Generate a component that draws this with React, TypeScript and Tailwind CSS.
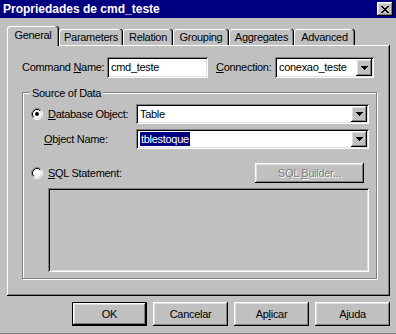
import type { ReactNode } from 'react'

const raised = 'shadow-[inset_-1px_-1px_#000,inset_1px_1px_#fff,inset_-2px_-2px_#808080,inset_2px_2px_#dfdfdf]'
const sunken = 'shadow-[inset_1px_1px_#808080,inset_-1px_-1px_#fff,inset_2px_2px_#000,inset_-2px_-2px_#dfdfdf]'

function Radio({ checked }: { checked?: boolean }) {
  return (
    <svg width="12" height="12" viewBox="0 0 12 12" className="shrink-0">
      <path d="M2.11 9.89 A5.5 5.5 0 0 1 9.89 2.11" fill="none" stroke="#808080" strokeWidth="1" />
      <path d="M9.89 2.11 A5.5 5.5 0 0 1 2.11 9.89" fill="none" stroke="#fff" strokeWidth="1" />
      <circle cx="6" cy="6" r="4.2" fill="#fff" />
      <path d="M2.82 9.18 A4.5 4.5 0 0 1 9.18 2.82" fill="none" stroke="#000" strokeWidth="1" />
      <path d="M9.18 2.82 A4.5 4.5 0 0 1 2.82 9.18" fill="none" stroke="#dfdfdf" strokeWidth="1" />
      {checked && <circle cx="6" cy="6" r="2" fill="#000" />}
    </svg>
  )
}

function DropButton() {
  return (
    <div className={`flex h-full w-[16px] shrink-0 items-center justify-center bg-[#c0c0c0] ${raised}`}>
      <svg width="7" height="4" viewBox="0 0 7 4" shapeRendering="crispEdges">
        <rect x="0" y="0" width="7" height="1" />
        <rect x="1" y="1" width="5" height="1" />
        <rect x="2" y="2" width="3" height="1" />
        <rect x="3" y="3" width="1" height="1" />
      </svg>
    </div>
  )
}

function Combo({ className, children }: { className: string; children: ReactNode }) {
  return (
    <div className={`flex items-stretch bg-white p-[2px] ${sunken} ${className}`}>
      <div className="flex flex-1 items-center pl-[2px]">{children}</div>
      <DropButton />
    </div>
  )
}

function Tab({ label, w, selected }: { label: string; w: string; selected?: boolean }) {
  return (
    <div
      className={`relative flex items-center justify-center rounded-t-[3px] bg-[#c0c0c0] shadow-[inset_-1px_0_#000,inset_-2px_0_#808080,inset_1px_1px_#fff] ${w} ${
        selected ? 'z-10 h-[20px] self-start pb-[1px]' : 'h-[16px]'
      }`}
    >
      {label}
    </div>
  )
}

function Button({ children, isDefault, disabled, className = 'w-[75px] h-[24px]' }: { children: ReactNode; isDefault?: boolean; disabled?: boolean; className?: string }) {
  return (
    <div
      className={`flex items-center justify-center bg-[#c0c0c0] ${raised} ${className} ${isDefault ? 'border border-black' : ''} ${
        disabled ? 'text-[#808080] [text-shadow:1px_1px_0_#fff]' : ''
      }`}
    >
      <span>{children}</span>
    </div>
  )
}

export default function App() {
  return (
    <div className="flex h-[334px] w-[396px] flex-col overflow-hidden border-b border-[#808080] bg-[#c0c0c0] font-['Liberation_Sans',Arial,sans-serif] text-[11px] tracking-[-0.3px] text-black select-none">
      {/* barra de título */}
      <div className="flex h-[18px] items-center justify-between bg-[#000080] pl-[3px] pr-[3px]">
        <span className="text-[12px] font-bold tracking-normal text-white">Propriedades de cmd_teste</span>
        <div className={`flex h-[14px] w-[16px] items-center justify-center bg-[#c0c0c0] ${raised}`}>
          <svg width="8" height="7" viewBox="0 0 8 7" shapeRendering="crispEdges">
            <rect x="0" y="0" width="2" height="1" />
            <rect x="6" y="0" width="2" height="1" />
            <rect x="1" y="1" width="2" height="1" />
            <rect x="5" y="1" width="2" height="1" />
            <rect x="2" y="2" width="4" height="1" />
            <rect x="3" y="3" width="2" height="1" />
            <rect x="2" y="4" width="4" height="1" />
            <rect x="1" y="5" width="2" height="1" />
            <rect x="5" y="5" width="2" height="1" />
            <rect x="0" y="6" width="2" height="1" />
            <rect x="6" y="6" width="2" height="1" />
          </svg>
        </div>
      </div>

      {/* abas */}
      <div className="mt-[8px] flex h-[19px] items-end pl-[7px]">
        <Tab label="General" w="w-[52px]" selected />
        <Tab label="Parameters" w="w-[64px]" />
        <Tab label="Relation" w="w-[50px]" />
        <Tab label="Grouping" w="w-[56px]" />
        <Tab label="Aggregates" w="w-[65px]" />
        <Tab label="Advanced" w="w-[61px]" />
      </div>

      {/* painel */}
      <div className="ml-[7px] h-[251px] w-[383px] bg-[#c0c0c0] pt-[12px] shadow-[inset_-1px_-1px_#000,inset_1px_1px_#fff,inset_-2px_-2px_#808080]">
        <div className="flex h-[21px] items-center pl-[15px]">
          <span className="w-[85px]">
            Command <u>N</u>ame:
          </span>
          <div className={`flex h-[21px] w-[101px] items-center bg-white pl-[4px] ${sunken}`}>cmd_teste</div>
          <span className="ml-[8px] w-[59px]">
            <u>C</u>onnection:
          </span>
          <Combo className="h-[21px] w-[99px]">conexao_teste</Combo>
        </div>

        <div className="relative ml-[15px] mt-[14px] h-[187px] w-[355px] border border-[#808080] pt-[11px] shadow-[1px_1px_0_#fff,inset_1px_1px_0_#fff]">
          <span className="absolute -top-[7px] left-[7px] bg-[#c0c0c0] px-[2px] leading-[14px]">Source of Data</span>

          <div className="flex h-[20px] items-center pl-[8px]">
            <Radio checked />
            <span className="ml-[5px] w-[88px]">
              <u>D</u>atabase Object:
            </span>
            <Combo className="h-[20px] w-[233px]">Table</Combo>
          </div>

          <div className="mt-[5px] flex h-[20px] items-center pl-[21px]">
            <span className="w-[92px]">
              <u>O</u>bject Name:
            </span>
            <Combo className="h-[20px] w-[233px]">
              <span className="bg-[#000080] px-[1px] leading-[14px] text-white">tblestoque</span>
            </Combo>
          </div>

          <div className="mt-[14px] flex h-[20px] items-center pl-[8px]">
            <Radio />
            <span className="ml-[5px] w-[207px]">
              <u>S</u>QL Statement:
            </span>
            <Button disabled className="h-[20px] w-[109px]">
              SQL <u>B</u>uilder...
            </Button>
          </div>

          <div className={`ml-[25px] mt-[5px] h-[84px] w-[321px] bg-[#c0c0c0] ${sunken}`} />
        </div>
      </div>

      {/* botões */}
      <div className="mt-[6px] flex justify-end gap-[6px] pr-[6px]">
        <Button isDefault>OK</Button>
        <Button>Cancelar</Button>
        <Button>
          Ap<u>l</u>icar
        </Button>
        <Button>Ajuda</Button>
      </div>
    </div>
  )
}
